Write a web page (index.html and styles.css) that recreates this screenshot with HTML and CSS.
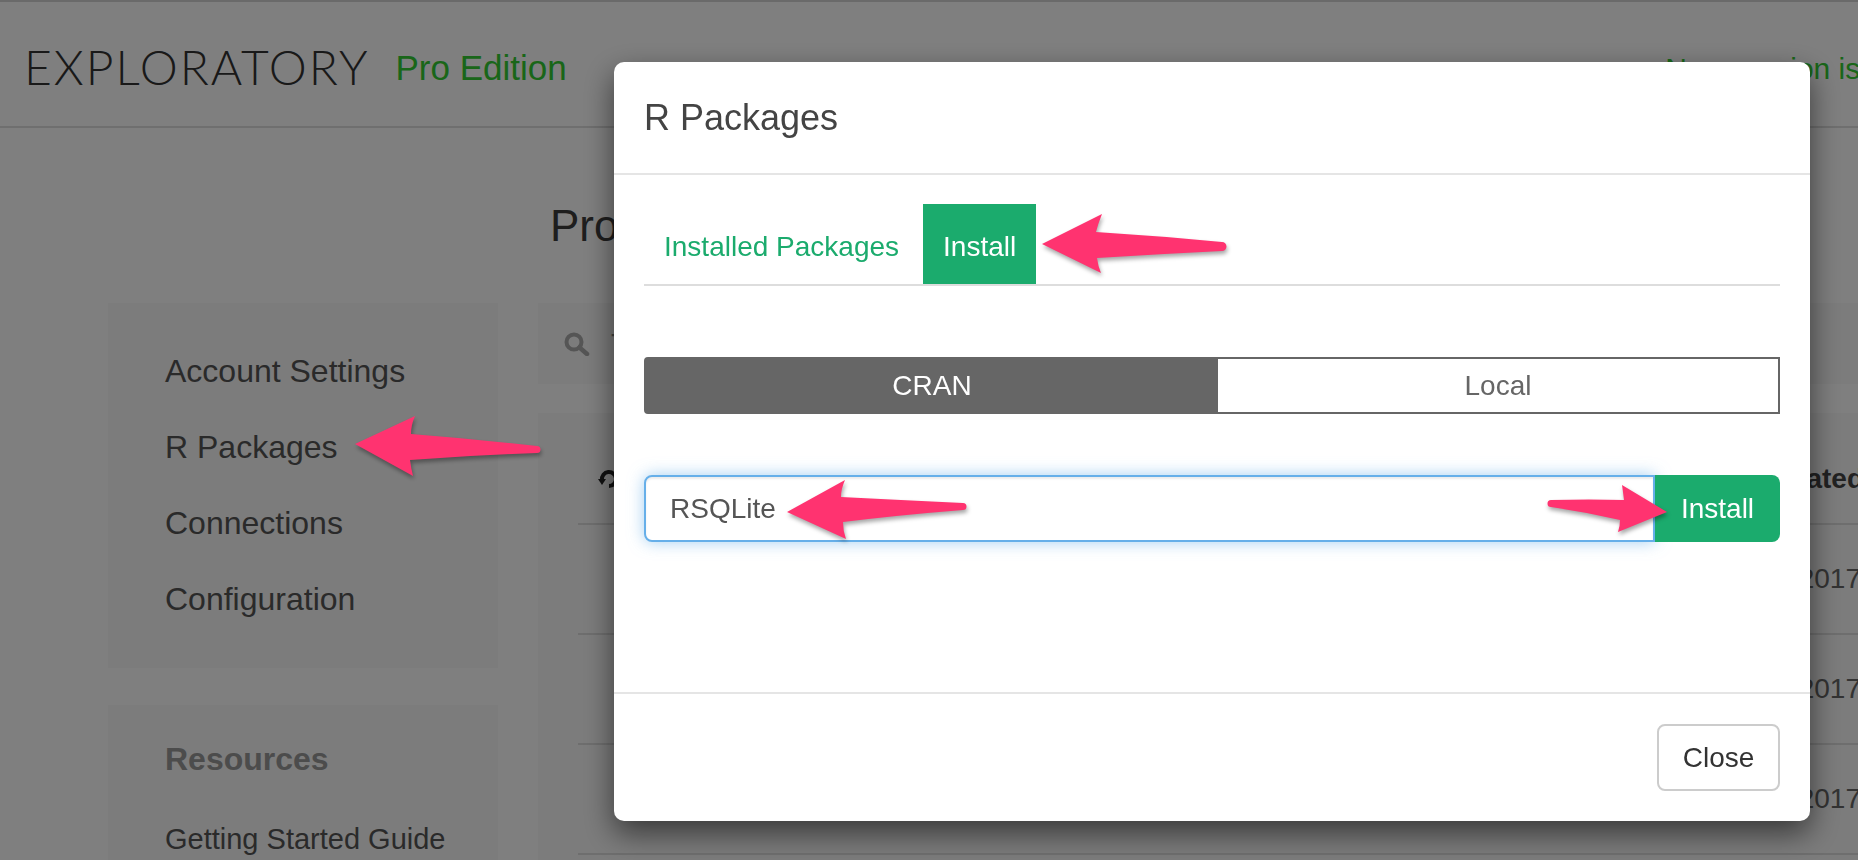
FILE: index.html
```html
<!DOCTYPE html>
<html lang="en">
<head>
  <meta charset="UTF-8" />
  <title>Exploratory - R Packages</title>
  <link rel="stylesheet" href="styles.css">
</head>
<body>

<div class="page">
  <header class="topbar">
    <div class="brand">EXPLORATORY</div>
    <div class="edition">Pro Edition</div>
    <div class="notice">New version is available</div>
  </header>

  <div class="content">
    <aside class="sidebar">
      <nav class="card side-menu">
        <a href="#">Account Settings</a>
        <a href="#">R Packages</a>
        <a href="#">Connections</a>
        <a href="#">Configuration</a>
      </nav>
      <div class="card side-resources">
        <h4>Resources</h4>
        <a href="#">Getting Started Guide</a>
      </div>
    </aside>

    <main class="main">
      <h2 class="page-title">Profile</h2>
      <div class="card search-box">
        <svg width="26" height="24" viewBox="0 0 26 24"><circle cx="10" cy="10" r="7.5" fill="none" stroke="#aaa" stroke-width="4"/><path d="M15.5 15.5 L23 22" stroke="#aaa" stroke-width="4.5" stroke-linecap="round"/></svg>
        <span>Type to search</span>
      </div>
      <div class="card pkg-table">
        <div class="tr th">
          <span class="first"><svg width="22" height="22" viewBox="0 0 22 22"><path d="M4 12 A7 7 0 1 1 11 18" fill="none" stroke="#222" stroke-width="4"/><path d="M0 11 L8 11 L4 17 Z" fill="#222"/></svg></span>
          <span>Updated</span>
        </div>
        <div class="tr"><span></span><span>1/5/2017</span></div>
        <div class="tr"><span></span><span>1/5/2017</span></div>
        <div class="tr"><span></span><span>1/5/2017</span></div>
      </div>
    </main>
  </div>
</div>

<div class="backdrop"></div>

<div class="modal">
  <div class="modal-header">
    <h3 class="modal-title">R Packages</h3>
  </div>
  <div class="modal-body">
    <div class="tabs">
      <a class="tab" href="#">Installed Packages</a>
      <a class="tab active" href="#">Install</a>
    </div>
    <div class="source-switch">
      <span class="on">CRAN</span>
      <span>Local</span>
    </div>
    <div class="install-row">
      <input class="pkg-input" type="text" value="RSQLite" />
      <button class="btn-install">Install</button>
    </div>
  </div>
  <div class="modal-footer">
    <button class="btn-close">Close</button>
  </div>
</div>

<svg class="arrows" width="1858" height="860" viewBox="0 0 1858 860">
  <path d="M1042 244 L1102 214 Q1098 224 1096 232 Q1160 236 1222 242 A4.5 4.5 0 0 1 1222 251 Q1160 254 1097 258 Q1098 266 1101 273 Z"/>
  <path d="M355 444 L415 416 Q411 425 411 434 Q475 439 537 446 A3.5 3.5 0 0 1 537 453 Q475 455 410 460 Q411 468 413 476 Z"/>
  <path d="M787 512 L845 480 Q841 489 841 497 Q900 500 963 503 A3.5 3.5 0 0 1 963 510 Q900 515 843 522 Q843 531 846 539 Z"/>
  <path d="M1667 512 L1618 532 Q1620 526 1620 520 Q1585 512 1551 507 A3 3 0 0 1 1551 500 Q1590 499 1624 500 Q1623 492 1622 485 Z"/>
</svg>

</body>
</html>
```

FILE: styles.css
```css
* {
  box-sizing: border-box;
}
html, body {
  margin: 0;
  overflow: hidden;
}
body {
  font-family: "Liberation Sans", Arial, sans-serif;
  background: #fff;
  color: #555;
}
.page {
  width: 2044px;
  height: 860px;
}

/* top bar */
.topbar {
  height: 128px;
  border-top: 2px solid #d4d4d4;
  border-bottom: 2px solid #dedede;
  display: flex;
  align-items: flex-start;
  padding: 0 57px 0 24px;
  white-space: nowrap;
}
.brand {
  margin-top: 36px;
  font-family: Lato, "Open Sans", sans-serif;
  font-weight: 300;
  font-size: 48px;
  line-height: 58px;
  letter-spacing: 2px;
  color: #333;
}
.edition {
  margin: 46px 0 0 26px;
  font-size: 35px;
  line-height: 40px;
  color: #3c3;
}
.notice {
  margin: 50px 0 0 auto;
  font-size: 30px;
  line-height: 34px;
  color: #3c3;
}

/* page content under the dialog */
.content {
  display: flex;
  gap: 40px;
  padding: 0 108px;
}
.sidebar {
  width: 390px;
  flex-shrink: 0;
  padding-top: 175px;
  display: flex;
  flex-direction: column;
  gap: 37px;
}
.card {
  background: #f8f8f8;
}
.side-menu {
  padding: 30px 57px 31px;
  display: flex;
  flex-direction: column;
}
.side-menu a {
  font-size: 32px;
  line-height: 76px;
  color: #555;
  text-decoration: none;
}
.side-resources {
  padding: 30px 57px;
  height: 220px;
  white-space: nowrap;
}
.side-resources h4 {
  margin: 0;
  font-size: 32px;
  line-height: 48px;
  color: #999;
}
.side-resources a {
  display: block;
  margin-top: 32px;
  font-size: 29px;
  line-height: 48px;
  color: #555;
  text-decoration: none;
}
.main {
  flex: 1;
}
.page-title {
  margin: 73px 0 52px 12px;
  font-size: 44px;
  line-height: 50px;
  font-weight: normal;
  color: #3d3d3d;
}
.search-box {
  height: 81px;
  display: flex;
  align-items: center;
  gap: 21px;
  padding-left: 26px;
  font-size: 28px;
  color: #888;
}
.pkg-table {
  margin-top: 29px;
  padding: 22px 40px 0;
  height: 520px;
}
.tr {
  display: grid;
  grid-template-columns: 1fr 144px;
  align-items: center;
  height: 110px;
  border-bottom: 2px solid #ddd;
  font-size: 28px;
  color: #666;
  white-space: nowrap;
}
.th {
  height: 90px;
  font-weight: bold;
  color: #444;
}
.th .first {
  padding-left: 20px;
  display: flex;
}

.backdrop {
  position: fixed;
  inset: 0;
  background: rgba(0, 0, 0, 0.5);
}

/* dialog */
.modal {
  position: fixed;
  left: 614px;
  top: 62px;
  width: 1196px;
  background: #fff;
  border-radius: 10px;
  box-shadow: 0 12px 30px rgba(0, 0, 0, 0.55);
}
.modal-header {
  padding: 30px;
  border-bottom: 2px solid #e5e5e5;
}
.modal-title {
  margin: 0;
  font-size: 36px;
  line-height: 51px;
  font-weight: normal;
  color: #444;
}
.modal-body {
  height: 517px;
  padding: 29px 30px 0;
}
.tabs {
  display: flex;
  border-bottom: 2px solid #ddd;
}
.tab {
  padding: 6px 20px 0;
  margin-right: 4px;
  line-height: 74px;
  font-size: 28px;
  color: #1bab6d;
  text-decoration: none;
}
.tab.active {
  background: #1bab6d;
  color: #fff;
}
.source-switch {
  margin-top: 71px;
  height: 57px;
  display: flex;
  border: 2px solid #666;
  border-radius: 4px 0 0 4px;
}
.source-switch span {
  flex: 1;
  display: flex;
  align-items: center;
  justify-content: center;
  font-size: 28px;
  color: #666;
}
.source-switch .on {
  flex: 0 0 572px;
  background: #666;
  color: #fff;
}
.install-row {
  margin-top: 61px;
  height: 67px;
  display: flex;
}
.pkg-input {
  flex: 1;
  padding: 0 24px;
  border: 2px solid #66afe9;
  border-radius: 8px 0 0 8px;
  box-shadow: inset 0 2px 2px rgba(0, 0, 0, 0.075), 0 0 16px rgba(102, 175, 233, 0.6);
  outline: none;
  font: 28px "Liberation Sans", Arial, sans-serif;
  color: #555;
}
.btn-install {
  width: 125px;
  border: 0;
  border-radius: 0 8px 8px 0;
  background: #1bab6d;
  color: #fff;
  font: 28px "Liberation Sans", Arial, sans-serif;
}
.modal-footer {
  padding: 30px;
  border-top: 2px solid #e5e5e5;
  display: flex;
  justify-content: flex-end;
}
.btn-close {
  width: 123px;
  height: 67px;
  border: 2px solid #ccc;
  border-radius: 8px;
  background: #fff;
  color: #333;
  font: 28px "Liberation Sans", Arial, sans-serif;
}

/* annotation arrows */
.arrows {
  position: fixed;
  left: 0;
  top: 0;
  pointer-events: none;
  fill: #ff3370;
  filter: drop-shadow(1px 3px 2px rgba(0, 0, 0, 0.35));
}
```
